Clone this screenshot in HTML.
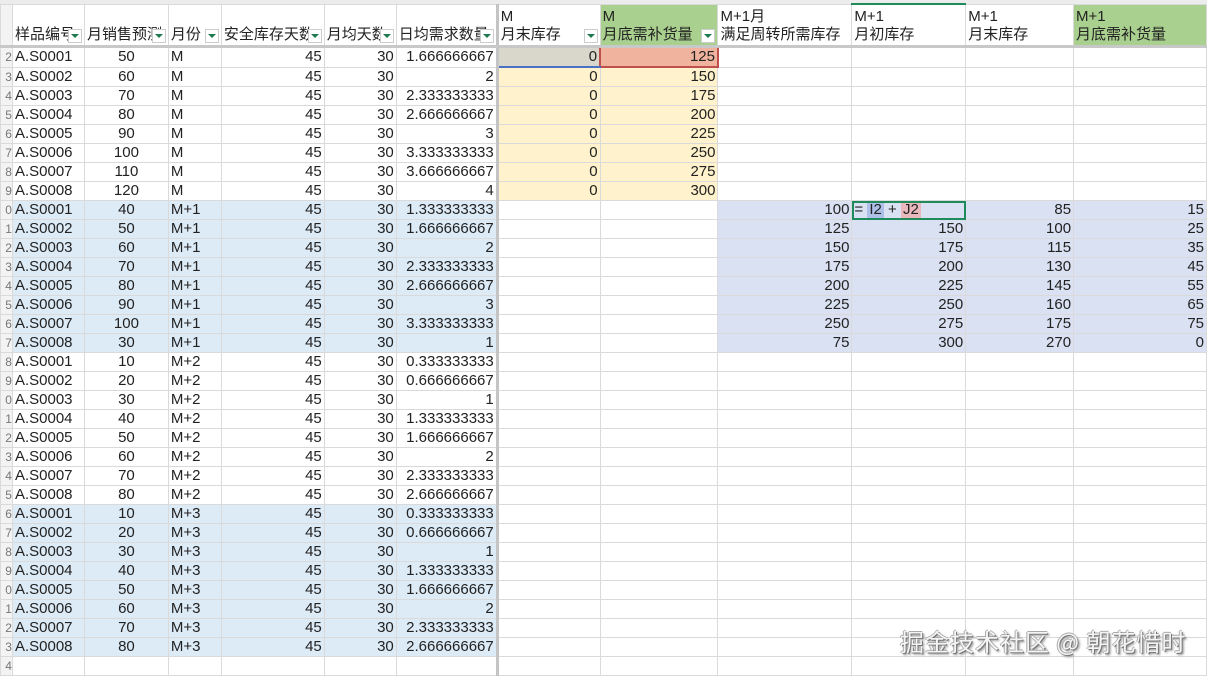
<!DOCTYPE html>
<html><head><meta charset="utf-8">
<style>
html,body{margin:0;padding:0;width:1207px;height:676px;overflow:hidden;background:#fff;font-family:"Liberation Sans","Noto Sans CJK SC",sans-serif;}
.top{position:absolute;left:0;top:0;width:1207px;height:4px;background:#ececec;}
table{position:absolute;left:0;top:3px;border-collapse:collapse;table-layout:fixed;font-size:15px;color:#222;}
td{border:1px solid #dadada;height:18px;padding:0 2px;white-space:nowrap;overflow:hidden;line-height:18px;}
tr.h td{height:39px;line-height:18px;vertical-align:bottom;border-bottom:3px solid #c8c8c8;position:relative;padding-bottom:1px;overflow:visible;}
td.r{text-align:right;}
td.c{text-align:center;}
td.n{color:#777;text-align:right;padding:0;font-size:12px;background:#f3f3f3;}
tr.b td.bl{background:#ddebf7;}
td.y{background:#fff2cc;}
td.p{background:#d9e1f2;}
td.g{background:#a9d08e;}
td.sep{border-right:3px solid #c4c4c4;}
.dd{position:absolute;right:2px;bottom:2px;width:12px;height:12px;border:1px solid #ccc;background:#fff;}
.dd:after{content:"";position:absolute;left:2px;top:4px;border-left:4px solid transparent;border-right:4px solid transparent;border-top:4px solid #1e7a4e;}
.wm{position:absolute;left:900px;top:623px;font-size:24px;color:#f4f4f4;text-shadow:1px 1px 0 #777,-1px 0 0 #aaa,0 -1px 0 #aaa,2px 2px 2px #888;font-family:"Noto Sans CJK SC",sans-serif;letter-spacing:1px;}
.f{outline:2px solid #1f8a5a;outline-offset:-2px;}
.hl1{background:#aebfe8;padding:0 2px;}
.hl2{background:#e8b8bc;padding:0 2px;}
</style></head><body>
<div class="top"></div>
<table>
<colgroup><col style="width:12px"><col style="width:72px"><col style="width:84px"><col style="width:53px"><col style="width:103px"><col style="width:72px"><col style="width:101px"><col style="width:103px"><col style="width:118px"><col style="width:134px"><col style="width:114px"><col style="width:108px"><col style="width:133px"></colgroup>
<tr class="h"><td class="n"></td><td>样品编号<span class="dd"></span></td><td>月销售预测<span class="dd"></span></td><td>月份<span class="dd"></span></td><td>安全库存天数<span class="dd"></span></td><td>月均天数<span class="dd"></span></td><td class="sep">日均需求数量<span class="dd"></span></td><td>M<br>月末库存<span class="dd"></span></td><td class="g">M<br>月底需补货量<span class="dd"></span></td><td>M+1月<br>满足周转所需库存</td><td style="border-top:2px solid #1f8a5a">M+1<br>月初库存</td><td>M+1<br>月末库存</td><td class="g">M+1<br>月底需补货量</td></tr>
<tr><td class="n">2</td><td>A.S0001</td><td class="c">50</td><td>M</td><td class="r">45</td><td class="r">30</td><td class="r sep">1.666666667</td><td class="r" style="background:#d9d6cc;border-bottom:2px solid #4a72c4">0</td><td class="r" style="background:#f0b49e;border:2px solid #c0504d">125</td><td></td><td></td><td></td><td></td></tr>
<tr><td class="n">3</td><td>A.S0002</td><td class="c">60</td><td>M</td><td class="r">45</td><td class="r">30</td><td class="r sep">2</td><td class="r y">0</td><td class="r y">150</td><td></td><td></td><td></td><td></td></tr>
<tr><td class="n">4</td><td>A.S0003</td><td class="c">70</td><td>M</td><td class="r">45</td><td class="r">30</td><td class="r sep">2.333333333</td><td class="r y">0</td><td class="r y">175</td><td></td><td></td><td></td><td></td></tr>
<tr><td class="n">5</td><td>A.S0004</td><td class="c">80</td><td>M</td><td class="r">45</td><td class="r">30</td><td class="r sep">2.666666667</td><td class="r y">0</td><td class="r y">200</td><td></td><td></td><td></td><td></td></tr>
<tr><td class="n">6</td><td>A.S0005</td><td class="c">90</td><td>M</td><td class="r">45</td><td class="r">30</td><td class="r sep">3</td><td class="r y">0</td><td class="r y">225</td><td></td><td></td><td></td><td></td></tr>
<tr><td class="n">7</td><td>A.S0006</td><td class="c">100</td><td>M</td><td class="r">45</td><td class="r">30</td><td class="r sep">3.333333333</td><td class="r y">0</td><td class="r y">250</td><td></td><td></td><td></td><td></td></tr>
<tr><td class="n">8</td><td>A.S0007</td><td class="c">110</td><td>M</td><td class="r">45</td><td class="r">30</td><td class="r sep">3.666666667</td><td class="r y">0</td><td class="r y">275</td><td></td><td></td><td></td><td></td></tr>
<tr><td class="n">9</td><td>A.S0008</td><td class="c">120</td><td>M</td><td class="r">45</td><td class="r">30</td><td class="r sep">4</td><td class="r y">0</td><td class="r y">300</td><td></td><td></td><td></td><td></td></tr>
<tr class="b"><td class="n">0</td><td class="bl">A.S0001</td><td class="c bl">40</td><td class="bl">M+1</td><td class="r bl">45</td><td class="r bl">30</td><td class="r bl sep">1.333333333</td><td></td><td></td><td class="r p">100</td><td class="p f">= <span class="hl1">I2</span> + <span class="hl2">J2</span></td><td class="r p">85</td><td class="r p">15</td></tr>
<tr class="b"><td class="n">1</td><td class="bl">A.S0002</td><td class="c bl">50</td><td class="bl">M+1</td><td class="r bl">45</td><td class="r bl">30</td><td class="r bl sep">1.666666667</td><td></td><td></td><td class="r p">125</td><td class="r p">150</td><td class="r p">100</td><td class="r p">25</td></tr>
<tr class="b"><td class="n">2</td><td class="bl">A.S0003</td><td class="c bl">60</td><td class="bl">M+1</td><td class="r bl">45</td><td class="r bl">30</td><td class="r bl sep">2</td><td></td><td></td><td class="r p">150</td><td class="r p">175</td><td class="r p">115</td><td class="r p">35</td></tr>
<tr class="b"><td class="n">3</td><td class="bl">A.S0004</td><td class="c bl">70</td><td class="bl">M+1</td><td class="r bl">45</td><td class="r bl">30</td><td class="r bl sep">2.333333333</td><td></td><td></td><td class="r p">175</td><td class="r p">200</td><td class="r p">130</td><td class="r p">45</td></tr>
<tr class="b"><td class="n">4</td><td class="bl">A.S0005</td><td class="c bl">80</td><td class="bl">M+1</td><td class="r bl">45</td><td class="r bl">30</td><td class="r bl sep">2.666666667</td><td></td><td></td><td class="r p">200</td><td class="r p">225</td><td class="r p">145</td><td class="r p">55</td></tr>
<tr class="b"><td class="n">5</td><td class="bl">A.S0006</td><td class="c bl">90</td><td class="bl">M+1</td><td class="r bl">45</td><td class="r bl">30</td><td class="r bl sep">3</td><td></td><td></td><td class="r p">225</td><td class="r p">250</td><td class="r p">160</td><td class="r p">65</td></tr>
<tr class="b"><td class="n">6</td><td class="bl">A.S0007</td><td class="c bl">100</td><td class="bl">M+1</td><td class="r bl">45</td><td class="r bl">30</td><td class="r bl sep">3.333333333</td><td></td><td></td><td class="r p">250</td><td class="r p">275</td><td class="r p">175</td><td class="r p">75</td></tr>
<tr class="b"><td class="n">7</td><td class="bl">A.S0008</td><td class="c bl">30</td><td class="bl">M+1</td><td class="r bl">45</td><td class="r bl">30</td><td class="r bl sep">1</td><td></td><td></td><td class="r p">75</td><td class="r p">300</td><td class="r p">270</td><td class="r p">0</td></tr>
<tr><td class="n">8</td><td>A.S0001</td><td class="c">10</td><td>M+2</td><td class="r">45</td><td class="r">30</td><td class="r sep">0.333333333</td><td></td><td></td><td></td><td></td><td></td><td></td></tr>
<tr><td class="n">9</td><td>A.S0002</td><td class="c">20</td><td>M+2</td><td class="r">45</td><td class="r">30</td><td class="r sep">0.666666667</td><td></td><td></td><td></td><td></td><td></td><td></td></tr>
<tr><td class="n">0</td><td>A.S0003</td><td class="c">30</td><td>M+2</td><td class="r">45</td><td class="r">30</td><td class="r sep">1</td><td></td><td></td><td></td><td></td><td></td><td></td></tr>
<tr><td class="n">1</td><td>A.S0004</td><td class="c">40</td><td>M+2</td><td class="r">45</td><td class="r">30</td><td class="r sep">1.333333333</td><td></td><td></td><td></td><td></td><td></td><td></td></tr>
<tr><td class="n">2</td><td>A.S0005</td><td class="c">50</td><td>M+2</td><td class="r">45</td><td class="r">30</td><td class="r sep">1.666666667</td><td></td><td></td><td></td><td></td><td></td><td></td></tr>
<tr><td class="n">3</td><td>A.S0006</td><td class="c">60</td><td>M+2</td><td class="r">45</td><td class="r">30</td><td class="r sep">2</td><td></td><td></td><td></td><td></td><td></td><td></td></tr>
<tr><td class="n">4</td><td>A.S0007</td><td class="c">70</td><td>M+2</td><td class="r">45</td><td class="r">30</td><td class="r sep">2.333333333</td><td></td><td></td><td></td><td></td><td></td><td></td></tr>
<tr><td class="n">5</td><td>A.S0008</td><td class="c">80</td><td>M+2</td><td class="r">45</td><td class="r">30</td><td class="r sep">2.666666667</td><td></td><td></td><td></td><td></td><td></td><td></td></tr>
<tr class="b"><td class="n">6</td><td class="bl">A.S0001</td><td class="c bl">10</td><td class="bl">M+3</td><td class="r bl">45</td><td class="r bl">30</td><td class="r bl sep">0.333333333</td><td></td><td></td><td></td><td></td><td></td><td></td></tr>
<tr class="b"><td class="n">7</td><td class="bl">A.S0002</td><td class="c bl">20</td><td class="bl">M+3</td><td class="r bl">45</td><td class="r bl">30</td><td class="r bl sep">0.666666667</td><td></td><td></td><td></td><td></td><td></td><td></td></tr>
<tr class="b"><td class="n">8</td><td class="bl">A.S0003</td><td class="c bl">30</td><td class="bl">M+3</td><td class="r bl">45</td><td class="r bl">30</td><td class="r bl sep">1</td><td></td><td></td><td></td><td></td><td></td><td></td></tr>
<tr class="b"><td class="n">9</td><td class="bl">A.S0004</td><td class="c bl">40</td><td class="bl">M+3</td><td class="r bl">45</td><td class="r bl">30</td><td class="r bl sep">1.333333333</td><td></td><td></td><td></td><td></td><td></td><td></td></tr>
<tr class="b"><td class="n">0</td><td class="bl">A.S0005</td><td class="c bl">50</td><td class="bl">M+3</td><td class="r bl">45</td><td class="r bl">30</td><td class="r bl sep">1.666666667</td><td></td><td></td><td></td><td></td><td></td><td></td></tr>
<tr class="b"><td class="n">1</td><td class="bl">A.S0006</td><td class="c bl">60</td><td class="bl">M+3</td><td class="r bl">45</td><td class="r bl">30</td><td class="r bl sep">2</td><td></td><td></td><td></td><td></td><td></td><td></td></tr>
<tr class="b"><td class="n">2</td><td class="bl">A.S0007</td><td class="c bl">70</td><td class="bl">M+3</td><td class="r bl">45</td><td class="r bl">30</td><td class="r bl sep">2.333333333</td><td></td><td></td><td></td><td></td><td></td><td></td></tr>
<tr class="b"><td class="n">3</td><td class="bl">A.S0008</td><td class="c bl">80</td><td class="bl">M+3</td><td class="r bl">45</td><td class="r bl">30</td><td class="r bl sep">2.666666667</td><td></td><td></td><td></td><td></td><td></td><td></td></tr>
<tr><td class="n">4</td><td></td><td></td><td></td><td></td><td></td><td class="sep"></td><td></td><td></td><td></td><td></td><td></td><td></td></tr>
</table>
<div class="wm">掘金技术社区 @ 朝花惜时</div>
</body></html>
